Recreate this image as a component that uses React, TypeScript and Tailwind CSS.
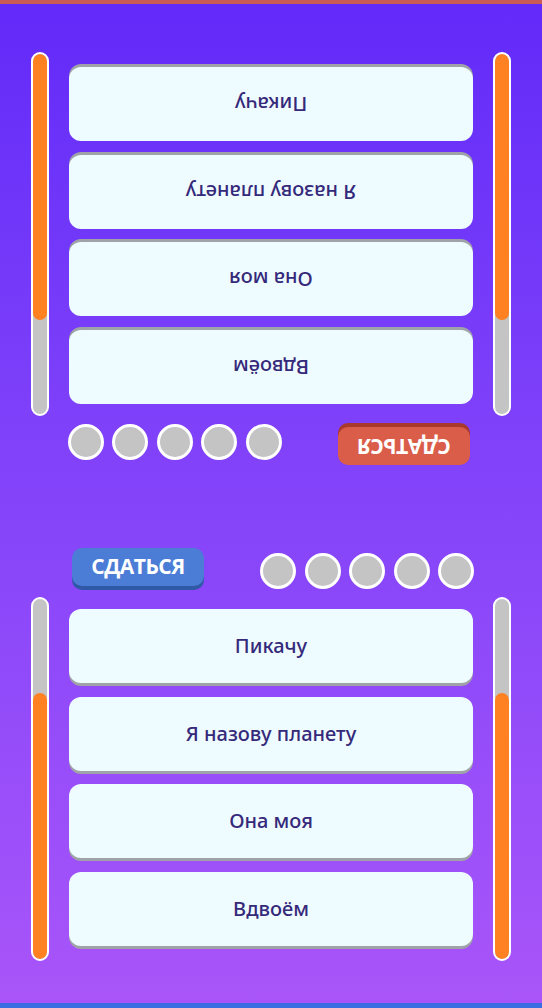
import React from "react";

const answers = ["Пикачу", "Я назову планету", "Она моя", "Вдвоём"];

function Bar() {
  return (
    <div className="w-[18px] h-full rounded-full border-2 border-white bg-[#c4c4c4] flex flex-col justify-end overflow-hidden">
      <div className="w-full h-[74%] rounded-full bg-[#ff8121]" />
    </div>
  );
}

function Player({ color, shadow, items }: { color: string; shadow: string; items: string[] }) {
  return (
    <div className="h-[413px] flex flex-col">
      <div className="h-[43px] flex items-start justify-between pl-[72px] pr-[68px]">
        <div
          className={`w-[132px] h-[38px] rounded-[10px] flex items-center justify-center text-white font-bold text-[21px] tracking-[-0.5px] ${color} ${shadow}`}
          style={{ fontFamily: '"Open Sans", "Noto Sans", sans-serif' }}
        >
          СДАТЬСЯ
        </div>
        <div className="flex gap-[8.5px] mt-[5px]">
          {[0, 1, 2, 3, 4].map((i) => (
            <div key={i} className="w-[36px] h-[36px] rounded-full border-[3px] border-white bg-[#c4c4c4]" />
          ))}
        </div>
      </div>
      <div className="mt-[6px] flex-1 flex px-[31px] gap-[20px]">
        <Bar />
        <div className="flex-1 flex flex-col pt-[12px] gap-[13.5px]">
          {items.map((a) => (
            <div
              key={a}
              className="h-[74px] rounded-[12px] bg-[#eefbff] shadow-[0_3px_0_#9fa3a8] flex items-center justify-center text-[20px] font-medium text-[#35297a]"
              style={{ fontFamily: '"Noto Sans", sans-serif' }}
            >
              {a}
            </div>
          ))}
        </div>
        <Bar />
      </div>
    </div>
  );
}

export default function App() {
  return (
    <div className="w-[542px] h-[1008px] flex flex-col bg-gradient-to-b from-[#6229f9] to-[#a955f9] overflow-hidden">
      <div className="h-[4px] bg-[#c95a58]" />
      <div className="h-[48px]" />
      <div className="rotate-180">
        <Player
          color="bg-[#da5d4a]"
          shadow="shadow-[0_4px_0_#a8392d]"
          items={["Вдвоём", "Она моя", "Я назову планету", "Пикачу"]}
        />
      </div>
      <div className="h-[83px]" />
      <Player color="bg-[#4b7dd6]" shadow="shadow-[0_4px_0_#2f58a6]" items={answers} />
      <div className="flex-1" />
      <div className="h-[5px] bg-[#3b6ee2]" />
    </div>
  );
}
